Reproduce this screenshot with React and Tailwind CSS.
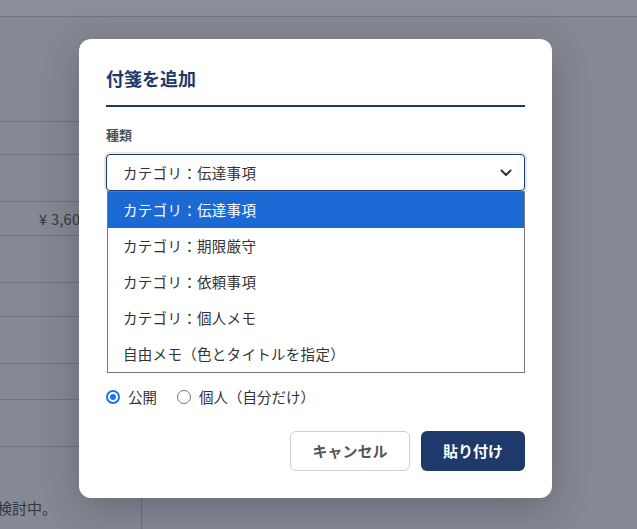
import { useState } from "react";

const FONT = "font-['Noto_Sans_CJK_JP','Noto_Sans',sans-serif]";

const OPTIONS = [
  "カテゴリ：伝達事項",
  "カテゴリ：期限厳守",
  "カテゴリ：依頼事項",
  "カテゴリ：個人メモ",
  "自由メモ（色とタイトルを指定）",
];

/* === page behind the overlay === */
function BackgroundPage() {
  const rows = [33, 47, 34, 47, 34, 47, 36, 47];
  return (
    <div className="min-h-[529px] bg-[#868994] text-[#33373f]">
      <div className="h-[17px] border-b border-[#737783] bg-[#8a8e99]" />
      <div className="w-[500px]">
        <div className="h-[105px] border-b border-[#71757f]" />
        {rows.map((h, i) => (
          <div
            key={i}
            className="flex items-center border-b border-[#71757f] pl-[39px] text-[14.5px]"
            style={{ height: h }}
          >
            {i === 2 && <span className="whitespace-nowrap tracking-[0.3px]">¥ 3,600</span>}
          </div>
        ))}
        <div className="flex h-[82px]">
          <div className="w-[142px] shrink-0 overflow-hidden border-r border-[#6c707b] pt-[50px] text-[15px]">
            <span className="-ml-[3px] whitespace-nowrap">検討中。</span>
          </div>
        </div>
      </div>
    </div>
  );
}

function Radio({ checked, label }) {
  return (
    <label className="flex items-center gap-[8px]">
      {checked ? (
        <span className="flex h-[14px] w-[14px] items-center justify-center rounded-full border-2 border-[#1a73e8] bg-white">
          <span className="h-[6px] w-[6px] rounded-full bg-[#1a73e8]" />
        </span>
      ) : (
        <span className="h-[14px] w-[14px] rounded-full border border-[#767676] bg-white" />
      )}
      <span>{label}</span>
    </label>
  );
}

/* === modal === */
function StickyModal() {
  const [value] = useState(OPTIONS[0]);
  return (
    <div className="w-[473px] rounded-[12px] bg-white px-[27px] pb-[27px] pt-[27px] shadow-[0_10px_40px_rgba(20,24,40,0.28)]">
      <h2 className="border-b-2 border-[#1e3a6b] pb-[15px] text-[18px] font-bold leading-6 text-[#1e3a6b]">
        付箋を追加
      </h2>

      <div className="mt-[18px] text-[13px] font-semibold leading-5 text-[#4a505a]">種類</div>

      <div className="relative mt-[9px]">
        <div className="flex h-[37px] items-center justify-between rounded-[4px] border border-[#1e3a6b] pl-[16px] pr-[12px] text-[14.5px] tracking-[0.3px] text-[#333] shadow-[0_0_0_2px_#e3e8ef]">
          <span>{value}</span>
          <svg width="12" height="8" viewBox="0 0 12 8" fill="none">
            <path d="M1.5 1.5 6 6l4.5-4.5" stroke="#333" strokeWidth="2" strokeLinecap="round" strokeLinejoin="round" />
          </svg>
        </div>

        <ul className="absolute left-[1px] right-0 top-full z-10 border border-[#767676] bg-white text-[14.5px] tracking-[0.3px] text-[#333]">
          {OPTIONS.map((o, i) => (
            <li
              key={o}
              className={
                i === 0
                  ? "flex h-[36px] items-center bg-[#1a69d4] pl-[15px] text-white"
                  : "flex h-[36px] items-center pl-[15px]"
              }
            >
              {o}
            </li>
          ))}
        </ul>
      </div>

      {/* fields hidden under the open list */}
      <div className="h-[196px]" />

      <div className="flex h-[20px] items-center gap-[20px] text-[14.5px] text-[#333]">
        <Radio checked label="公開" />
        <Radio label="個人（自分だけ）" />
      </div>

      <div className="mt-[24px] flex justify-end gap-[11px]">
        <button className="h-[40px] w-[120px] rounded-[6px] border border-[#cfcfcf] bg-white text-[15px] font-bold text-[#555]">
          キャンセル
        </button>
        <button className="h-[40px] w-[104px] rounded-[6px] bg-[#1e3a6b] text-[15px] font-bold text-white">
          貼り付け
        </button>
      </div>
    </div>
  );
}

export default function App() {
  return (
    <div className={`relative h-[529px] overflow-hidden ${FONT}`}>
      <BackgroundPage />
      <div className="absolute inset-0 flex items-start justify-center pr-[6px] pt-[39px]">
        <StickyModal />
      </div>
    </div>
  );
}
